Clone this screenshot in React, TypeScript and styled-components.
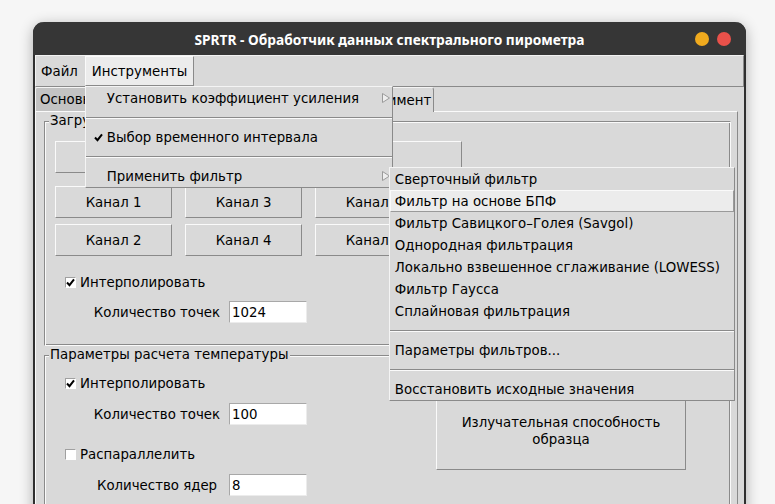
import React from 'react';
import styled, { createGlobalStyle, css } from 'styled-components';

const GlobalStyle = createGlobalStyle`
  html, body {
    margin: 0;
    padding: 0;
  }
  body {
    background: #f6f6f6;
    font-family: "DejaVu Sans", "Liberation Sans", sans-serif;
    font-size: 13.33px;
    color: #000;
  }
`;

const Desktop = styled.div`
  width: 775px;
  height: 504px;
  overflow: hidden;
  box-sizing: border-box;
  padding: 22px 0 0 33px;
  background: #f6f6f6;
`;

const Window = styled.div`
  width: 713px;
  height: 560px;
  box-sizing: border-box;
  border: 2px solid #2f2f2f;
  border-top: none;
  border-radius: 11px 11px 0 0;
  background: #d9d9d9;
  box-shadow: 0 3px 14px rgba(0, 0, 0, 0.3);
  display: flex;
  flex-direction: column;
`;

const TitleBar = styled.header`
  flex: none;
  height: 33px;
  margin: 0 -2px;
  display: grid;
  grid-template-columns: 1fr auto 1fr;
  align-items: center;
  background: #363636;
  border-radius: 11px 11px 0 0;
  color: #fff;
  font-family: "Noto Sans", "Open Sans", sans-serif;
  font-weight: 700;
  font-size: 13.75px;
`;

const Title = styled.div`
  grid-column: 2;
  white-space: nowrap;
  padding-top: 1px;
`;

const Controls = styled.div`
  grid-column: 3;
  justify-self: end;
  display: flex;
  gap: 8px;
  padding-right: 15px;
`;

const Dot = styled.span<{ $c: string }>`
  width: 14px;
  height: 14px;
  border-radius: 50%;
  background: ${p => p.$c};
`;

const MenuBar = styled.nav`
  flex: none;
  height: 32px;
  box-sizing: border-box;
  display: flex;
  align-items: stretch;
  border: 1px solid;
  border-color: #f2f2f2 #8a8a8a #8a8a8a #f2f2f2;
  position: relative;
  z-index: 5;
`;

const MenuTitle = styled.div<{ $open?: boolean; $pl?: number }>`
  position: relative;
  display: flex;
  align-items: center;
  padding: 0 6px 0 ${p => p.$pl ?? 6}px;
  border: 1px solid transparent;
  ${p =>
    p.$open &&
    css`
      background: #ececec;
      border-color: #fafafa #8a8a8a #8a8a8a #fafafa;
    `}
`;

const Dropdown = styled.div<{ $w: number }>`
  position: absolute;
  top: calc(100% + 1px);
  left: -1px;
  width: ${p => p.$w}px;
  box-sizing: border-box;
  background: #d9d9d9;
  border: 1px solid;
  border-color: #f4f4f4 #8a8a8a #8a8a8a #f4f4f4;
  display: flex;
  flex-direction: column;
`;

const SubMenu = styled(Dropdown)`
  top: 1px;
  left: calc(100% - 2px);
`;

const MenuRow = styled.div<{ $hl?: boolean; $pl: number }>`
  position: relative;
  height: 22px;
  box-sizing: border-box;
  display: flex;
  align-items: center;
  padding: 0 1px 0 ${p => p.$pl}px;
  border: 1px solid transparent;
  white-space: nowrap;
  ${p =>
    p.$hl &&
    css`
      background: #ececec;
      border-color: #fafafa #9a9a9a #9a9a9a #fafafa;
    `}
`;

const Indicator = styled.span`
  width: 13px;
  display: flex;
  align-items: center;
`;

const Arrow = styled.svg`
  margin-left: auto;
`;

const Separator = styled.div`
  height: 17px;
  display: flex;
  align-items: center;

  &::after {
    content: '';
    flex: 1;
    border-top: 1px solid #8a8a8a;
    border-bottom: 1px solid #fafafa;
  }
`;

const Notebook = styled.div`
  flex: 1;
  display: flex;
  flex-direction: column;
  margin-right: 6px;
`;

const TabBar = styled.div`
  height: 24px;
  flex: none;
  display: flex;
  align-items: stretch;
`;

const Tab = styled.div<{ $active?: boolean; $w: number }>`
  width: ${p => p.$w}px;
  box-sizing: border-box;
  display: flex;
  align-items: center;
  justify-content: ${p => (p.$active ? 'center' : 'flex-start')};
  padding: 0 4px;
  white-space: nowrap;
  background: ${p => (p.$active ? '#d9d9d9' : '#c3c3c3')};
  border: 1px solid;
  border-bottom: none;
  border-color: #f4f4f4 #8a8a8a transparent #f4f4f4;
  border-radius: 2px 3px 0 0;
  ${p =>
    p.$active &&
    css`
      position: relative;
      z-index: 1;
      margin-bottom: -1px;
    `}
`;

const Panel = styled.div`
  flex: 1;
  display: flex;
  flex-direction: column;
  gap: 9px;
  padding: 9px 6px 0 8px;
  border-top: 1px solid #fafafa;
  border-left: 1px solid #fafafa;
  border-right: 1px solid #8a8a8a;
`;

const Group = styled.section<{ $pb: number }>`
  display: flex;
  flex-direction: column;
  align-items: flex-start;
  padding: 0 10px ${p => p.$pb}px 10px;
  border: 1px solid;
  border-color: #8a8a8a #fafafa #fafafa #8a8a8a;
  box-shadow: inset 1px 1px 0 #fafafa, inset -1px -1px 0 #8a8a8a;
`;

const Legend = styled.div<{ $after: number }>`
  line-height: 16px;
  margin: -9px 0 ${p => p.$after}px -6px;
  padding: 0 2px 0 1px;
  background: #d9d9d9;
  white-space: nowrap;
`;

const Button = styled.div<{ $w: number; $h: number }>`
  width: ${p => p.$w}px;
  height: ${p => p.$h}px;
  box-sizing: border-box;
  display: flex;
  align-items: center;
  justify-content: center;
  text-align: center;
  line-height: 17px;
  white-space: nowrap;
  border: 1px solid;
  border-color: #fafafa #8a8a8a #8a8a8a #fafafa;
`;

const ChannelGrid = styled.div`
  margin-top: 13px;
  display: grid;
  grid-template-columns: repeat(3, 117px);
  grid-auto-rows: 32px;
  column-gap: 13px;
  row-gap: 6px;
`;

const CheckRow = styled.label<{ $mt: number }>`
  margin: ${p => p.$mt}px 0 0 10px;
  height: 16px;
  display: flex;
  align-items: center;
  gap: 4px;
`;

const Box = styled.span`
  width: 11px;
  height: 11px;
  box-sizing: border-box;
  background: #fff;
  border: 1px solid;
  border-color: #a0a0a0 #fff #fff #a0a0a0;
  display: flex;
  align-items: center;
  justify-content: center;
`;

const FieldRow = styled.div<{ $mt: number }>`
  margin: ${p => p.$mt}px 0 0 30px;
  display: grid;
  grid-template-columns: 144px 78px;
  align-items: center;
`;

const FieldLabel = styled.span`
  text-align: center;
  white-space: nowrap;
`;

const Entry = styled.div`
  height: 22px;
  box-sizing: border-box;
  background: #fff;
  border: 1px solid;
  border-color: #a8a8a8 #ececec #ececec #a8a8a8;
  padding: 0 2px;
  display: flex;
  align-items: center;
`;

const TwoCols = styled.div`
  display: grid;
  grid-template-columns: 381px 250px;
`;

const Column = styled.div<{ $mt?: number }>`
  display: flex;
  flex-direction: column;
  align-items: flex-start;
  margin-top: ${p => p.$mt ?? 0}px;
`;

const Check = () => (
  <svg width="9" height="9" viewBox="0 0 9 9">
    <path d="M1 4.5 L3.5 7.2 L8 1.3" fill="none" stroke="#000" strokeWidth="2" />
  </svg>
);

const MenuArrow = () => (
  <Arrow width="8" height="10" viewBox="0 0 8 10">
    <polygon points="0.5,0.5 7.5,5 0.5,9.5" fill="#eeeeee" stroke="#9a9a9a" strokeWidth="1" />
  </Arrow>
);

const filters = [
  'Сверточный фильтр',
  'Фильтр на основе БПФ',
  'Фильтр Савицкого–Голея (Savgol)',
  'Однородная фильтрация',
  'Локально взвешенное сглаживание (LOWESS)',
  'Фильтр Гаусса',
  'Сплайновая фильтрация',
];

const CheckField: React.FC<{ label: string; checked: boolean; mt: number }> = ({ label, checked, mt }) => (
  <CheckRow $mt={mt}>
    <Box>{checked && <Check />}</Box>
    {label}
  </CheckRow>
);

const Field: React.FC<{ label: string; value: string; mt: number }> = ({ label, value, mt }) => (
  <FieldRow $mt={mt}>
    <FieldLabel>{label}</FieldLabel>
    <Entry>{value}</Entry>
  </FieldRow>
);

export default function App() {
  return (
    <>
      <GlobalStyle />
      <Desktop>
        <Window>
          <TitleBar>
            <Title>SPRTR - Обработчик данных спектрального пирометра</Title>
            <Controls>
              <Dot $c="#f0aa1e" />
              <Dot $c="#e9514a" />
            </Controls>
          </TitleBar>

          <MenuBar>
            <MenuTitle $pl={4}>Файл</MenuTitle>
            <MenuTitle $open>
              Инструменты
              <Dropdown $w={308}>
                <MenuRow $pl={20}>
                  Установить коэффициент усиления
                  <MenuArrow />
                </MenuRow>
                <Separator />
                <MenuRow $pl={7}>
                  <Indicator>
                    <Check />
                  </Indicator>
                  Выбор временного интервала
                </MenuRow>
                <Separator />
                <MenuRow $pl={20}>
                  Применить фильтр
                  <MenuArrow />
                  <SubMenu $w={346}>
                    {filters.map((f, i) => (
                      <MenuRow key={f} $pl={4} $hl={i === 1}>
                        {f}
                      </MenuRow>
                    ))}
                    <Separator />
                    <MenuRow $pl={4}>Параметры фильтров...</MenuRow>
                    <Separator />
                    <MenuRow $pl={4}>Восстановить исходные значения</MenuRow>
                  </SubMenu>
                </MenuRow>
              </Dropdown>
            </MenuTitle>
          </MenuBar>

          <Notebook>
            <TabBar>
              <Tab $w={150}>Основное</Tab>
              <Tab $w={150}>Обработка</Tab>
              <Tab $w={99} $active>
                Эксперимент
              </Tab>
            </TabBar>
            <Panel>
              <Group $pb={22}>
                <Legend $after={12}>Загрузка данных</Legend>
                <Button $w={407} $h={32}>
                  Загрузить данные
                </Button>
                <ChannelGrid>
                  <Button $w={117} $h={32}>Канал 1</Button>
                  <Button $w={117} $h={32}>Канал 3</Button>
                  <Button $w={117} $h={32}>Канал 5</Button>
                  <Button $w={117} $h={32}>Канал 2</Button>
                  <Button $w={117} $h={32}>Канал 4</Button>
                  <Button $w={117} $h={32}>Канал 6</Button>
                </ChannelGrid>
                <CheckField label="Интерполировать" checked mt={18} />
                <Field label="Количество точек" value="1024" mt={11} />
              </Group>

              <Group $pb={20}>
                <Legend $after={12}>Параметры расчета температуры</Legend>
                <TwoCols>
                  <Column>
                    <CheckField label="Интерполировать" checked mt={0} />
                    <Field label="Количество точек" value="100" mt={12} />
                    <CheckField label="Распараллелить" checked={false} mt={21} />
                    <Field label="Количество ядер" value="8" mt={12} />
                  </Column>
                  <Column $mt={17}>
                    <Button $w={250} $h={78}>
                      Излучательная способность
                      <br />
                      образца
                    </Button>
                  </Column>
                </TwoCols>
              </Group>
            </Panel>
          </Notebook>
        </Window>
      </Desktop>
    </>
  );
}
